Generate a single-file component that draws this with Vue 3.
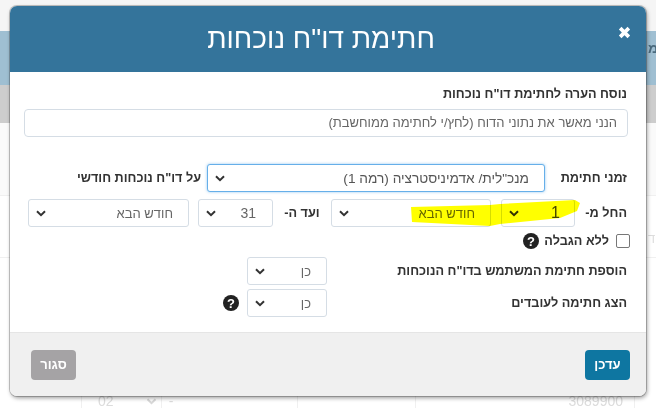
<script setup>
const chevron = "M1 1.2 5 5.2 9 1.2";
</script>

<template>
  <div class="page" dir="rtl">
    <div class="bg">
      <div class="bg-top"></div>
      <div class="bg-blue"><span class="bg-blue-text">ימ</span></div>
      <div class="bg-gray"></div>
      <div class="bg-rest">
        <div class="bg-row bg-row-a"></div>
        <div class="bg-row bg-row-b"><span class="ghost-side">חד</span></div>
        <div class="bg-cells">
          <span class="cell cell-a">3089900</span>
          <span class="cell cell-b"></span>
          <span class="cell cell-c">-</span>
          <span class="cell cell-d">02<svg class="ghost-chev" viewBox="0 0 10 7"><path :d="chevron" /></svg></span>
        </div>
      </div>
    </div>

    <div class="modal">
      <header class="head">
        <h1 class="title">חתימת דו"ח נוכחות</h1>
        <svg class="close" viewBox="0 0 12 12"><path d="M2 2 10 10M10 2 2 10" /></svg>
      </header>

      <main class="body">
        <label class="note-label">נוסח הערה לחתימת דו"ח נוכחות</label>
        <div class="note-input">הנני מאשר את נתוני הדוח (לחץ/י לחתימה ממוחשבת)</div>

        <div class="row row-sign">
          <span class="lab lab-sign">זמני חתימת</span>
          <div class="sel sel-role focus">
            <span>מנכ"לית/ אדמיניסטרציה (רמה 1)</span>
            <svg class="chev" viewBox="0 0 10 7"><path :d="chevron" /></svg>
          </div>
          <span class="lab lab-on">על דו"ח נוכחות חודשי</span>
        </div>

        <div class="row row-range">
          <span class="lab lab-from">החל מ-</span>
          <div class="sel sel-day">
            <span>1</span>
            <svg class="chev" viewBox="0 0 10 7"><path :d="chevron" /></svg>
          </div>
          <div class="sel sel-month">
            <span>חודש הבא</span>
            <svg class="chev" viewBox="0 0 10 7"><path :d="chevron" /></svg>
          </div>
          <span class="lab lab-to">ועד ה-</span>
          <div class="sel sel-day2">
            <span>31</span>
            <svg class="chev" viewBox="0 0 10 7"><path :d="chevron" /></svg>
          </div>
          <div class="sel sel-month2">
            <span>חודש הבא</span>
            <svg class="chev" viewBox="0 0 10 7"><path :d="chevron" /></svg>
          </div>
          <svg class="marker" viewBox="0 0 172 30">
            <path d="M1 8 L80 6 L90 5 L165 1 L170 4 L167 12 L150 19 L90 25 L80 27 L2 23 Z" />
          </svg>
        </div>

        <div class="row row-check">
          <span class="box"></span>
          <span class="lab lab-check">ללא הגבלה</span>
          <svg class="q" viewBox="0 0 16 16"><circle cx="8" cy="8" r="8" /><text x="8" y="12.6" text-anchor="middle">?</text></svg>
        </div>

        <div class="row row-yes">
          <span class="lab lab-yes">הוספת חתימת המשתמש בדו"ח הנוכחות</span>
          <div class="sel sel-yes">
            <span>כן</span>
            <svg class="chev" viewBox="0 0 10 7"><path :d="chevron" /></svg>
          </div>
        </div>

        <div class="row row-yes2">
          <span class="lab lab-yes">הצג חתימה לעובדים</span>
          <div class="sel sel-yes">
            <span>כן</span>
            <svg class="chev" viewBox="0 0 10 7"><path :d="chevron" /></svg>
          </div>
          <svg class="q q2" viewBox="0 0 16 16"><circle cx="8" cy="8" r="8" /><text x="8" y="12.6" text-anchor="middle">?</text></svg>
        </div>
      </main>

      <footer class="foot">
        <button class="btn primary">עדכן</button>
        <button class="btn muted">סגור</button>
      </footer>
    </div>
  </div>
</template>

<style>
html, body { margin: 0; padding: 0; background: #fff; }
</style>

<style scoped>
.page {
  position: relative;
  width: 656px;
  height: 408px;
  overflow: hidden;
  font-family: "Liberation Sans", "Open Sans", sans-serif;
  color: #333;
}
.bg { position: absolute; inset: 0; display: flex; flex-direction: column; }
.bg-top { height: 31px; background: #f5f5f5; }
.bg-blue { height: 54px; background: #9fbfd2; position: relative; }
.bg-blue-text { position: absolute; left: 648px; top: 9px; font-size: 14px; font-weight: 700; color: #4b6b7e; white-space: nowrap; direction: rtl; }
.bg-gray { height: 38px; background: #cdcdcd; }
.bg-rest { flex: 1; background: #fff; position: relative; }
.bg-row-a { height: 72px; background: #fafafa; border-bottom: 1px solid #f0f0f0; }
.bg-row-b { height: 61px; border-bottom: 1px solid #f0f0f0; position: relative; }
.ghost-side { position: absolute; left: 648px; top: 35px; color: #ddd; font-size: 13px; white-space: nowrap; }
.bg-cells { position: absolute; left: 0; top: 270px; }
.cell { position: absolute; top: 0; height: 16px; font-size: 14px; line-height: 16px; color: #dcdcdc; border-left: 1px solid #f0f0f0; }
.cell-a { left: 415px; width: 220px; direction: ltr; text-align: right; box-sizing: border-box; border-right: 1px solid #f0f0f0; padding-right: 11px; }
.cell-b { left: 297px; width: 1px; }
.cell-c { left: 161px; width: 18px; direction: ltr; text-align: center; }
.cell-d { left: 81px; width: 80px; direction: ltr; padding-left: 16px; box-sizing: border-box; }
.ghost-chev { position: absolute; left: 64px; top: 5px; width: 11px; height: 7px; fill: none; stroke: #d8d8d8; stroke-width: 2; }

.modal {
  position: absolute;
  left: 10px;
  top: 6px;
  width: 636px;
  height: 390px;
  background: #fff;
  border-radius: 7px;
  box-shadow: 0 0 0 1px rgba(0, 0, 0, .2), 1px 2px 4px rgba(0, 0, 0, .4);
  display: flex;
  flex-direction: column;
  overflow: hidden;
}
.head {
  height: 66px;
  flex: none;
  background: #34749b;
  position: relative;
  display: flex;
  align-items: center;
  justify-content: center;
  padding-right: 14px;
  box-sizing: border-box;
}
.title { margin: 0; font-size: 28px; font-weight: 400; color: #fff; }
.close { position: absolute; right: 15px; top: 20px; width: 13px; height: 13px; fill: none; stroke: #fff; stroke-width: 3.4; }
.body { flex: 1; padding: 0 18px 0 14px; display: flex; flex-direction: column; min-height: 0; }
.note-label { margin-top: 13px; padding-right: 1px; font-size: 12.7px; font-weight: 700; line-height: 18px; }
.note-input {
  margin-top: 6px;
  height: 28px;
  border: 1px solid #d5dde5;
  border-radius: 4px;
  box-sizing: border-box;
  padding: 0 10px;
  font-size: 13px;
  line-height: 26px;
  color: #666;
}
.row { display: flex; align-items: center; position: relative; flex: none; padding-right: 1px; }
.row-sign { margin-top: 27px; height: 28px; }
.row-range { margin-top: 7px; height: 28px; }
.row-check { margin-top: 7px; height: 14px; }
.row-yes { margin-top: 9px; height: 28px; }
.row-yes2 { margin-top: 4px; height: 28px; }
.lab { font-size: 12.7px; font-weight: 700; color: #333; white-space: nowrap; }
.lab-sign { width: 82px; flex: none; }
.lab-on { margin-right: 6px; }
.lab-from { width: 52px; flex: none; }
.lab-to { width: 58px; flex: none; text-align: center; }
.lab-check { margin-right: 7px; }
.lab-yes { width: 300px; flex: none; }
.sel {
  box-sizing: border-box;
  height: 28px;
  border: 1px solid #d5dde5;
  border-radius: 3px;
  display: flex;
  align-items: center;
  justify-content: space-between;
  padding: 0 15px 0 7px;
  background: #fff;
  color: #666;
  font-size: 13px;
  flex: none;
}
.focus { border-color: #66afe9; box-shadow: 0 0 3px rgba(102, 175, 233, .7); }
.sel-role { width: 338px; font-size: 13.7px; color: #555; }
.sel-day { width: 74px; font-size: 16px; padding-right: 14px; color: #444; }
.sel-month { width: 160px; margin-right: 10px; }
.sel-day2 { width: 75px; font-size: 14px; padding-right: 16px; }
.sel-month2 { width: 161px; margin-right: 9px; }
.sel-yes { width: 80px; }
.chev { width: 10px; height: 7px; fill: none; stroke: #333; stroke-width: 2; flex: none; }
.marker {
  position: absolute;
  left: 386px;
  top: 0;
  width: 172px;
  height: 30px;
  fill: #ffff00;
  mix-blend-mode: multiply;
}
.box { width: 12px; height: 12px; border: 1px solid #777; border-radius: 2px; margin-right: -3px; flex: none; }
.q { width: 16px; height: 16px; margin-right: 5px; flex: none; }
.q2 { margin-right: 8px; }
.q circle { fill: #222; }
.q text { fill: #fff; font-size: 13px; font-weight: 700; font-family: "Liberation Sans", sans-serif; }
.foot {
  height: 64px;
  flex: none;
  background: #f0f0f0;
  border-top: 1px solid #e5e5e5;
  box-sizing: border-box;
  padding: 0 16px 0 21px;
  display: flex;
  align-items: center;
  justify-content: space-between;
}
.btn { border: 0; padding: 0; border-radius: 4px; height: 30px; width: 45px; color: #fff; font: 700 13px "Liberation Sans", sans-serif; }
.primary { background: #0e76a1; }
.muted { background: #a5a3a5; }
</style>
